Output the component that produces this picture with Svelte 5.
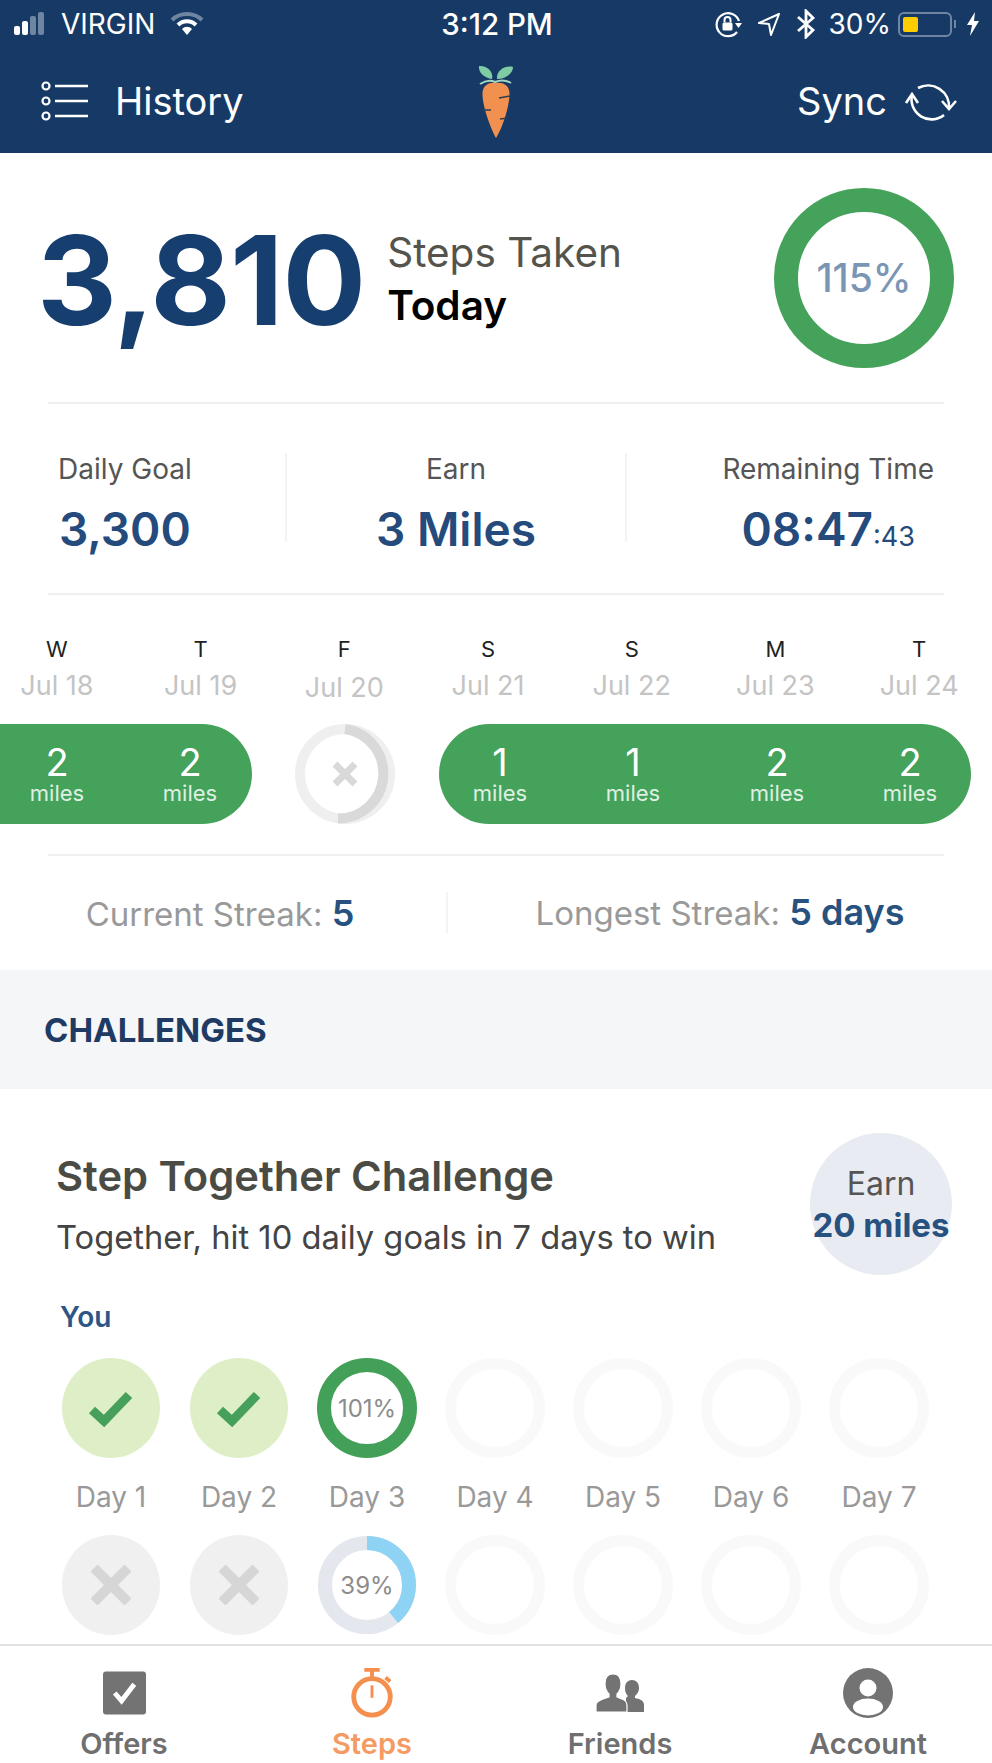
<script>
    const week = [
        ['W', 'Jul 18'], ['T', 'Jul 19'], ['F', 'Jul 20'], ['S', 'Jul 21'],
        ['S', 'Jul 22'], ['M', 'Jul 23'], ['T', 'Jul 24']
    ];
    const days = [1, 2, 3, 4, 5, 6, 7];
    const ring = 2 * Math.PI * 42;
</script>

<div class="phone">
    <header class="top">
        <div class="status">
            <div class="status-left">
                <svg class="signal" width="36" height="24" viewBox="0 0 36 24">
                    <rect x="0" y="14" width="6" height="9" rx="2" fill="#fff" />
                    <rect x="8" y="9" width="6" height="14" rx="2" fill="#fff" />
                    <rect x="16" y="4" width="6" height="19" rx="2" fill="#6f86a3" />
                    <rect x="24" y="0" width="6" height="23" rx="2" fill="#6f86a3" />
                </svg>
                <span>VIRGIN</span>
                <svg class="wifi" width="34" height="24" viewBox="0 0 34 24" fill="none">
                    <path d="M2 8 C10 0 24 0 32 8" stroke="#6f86a3" stroke-width="4" />
                    <path d="M8 13 C13 8 21 8 26 13" stroke="#fff" stroke-width="4" />
                    <path d="M12 17 C15 14 19 14 22 17 L17 23 Z" fill="#fff" />
                </svg>
            </div>
            <div class="time">3:12 PM</div>
            <div class="status-right">
                <svg width="28" height="28" viewBox="0 0 28 28" fill="none">
                    <path d="M23 22 A11.500 11.500 0 1 1 25 11" stroke="#fff" stroke-width="2.200" />
                    <path d="M21 13 L28 13 L24.500 18 Z" fill="#fff" />
                    <rect x="8.500" y="12.500" width="10" height="8" rx="1.500" fill="#fff" />
                    <path d="M10.500 12.500 V10 a3 3 0 0 1 6 0 V12.500" stroke="#fff" stroke-width="2" />
                </svg>
                <svg class="arrow" width="24" height="24" viewBox="0 0 24 24" fill="none">
                    <path d="M22 2 L2 11 L12 12 L14 23 Z" stroke="#fff" stroke-width="2" stroke-linejoin="round" />
                </svg>
                <svg class="bt" width="20" height="30" viewBox="0 0 20 30" fill="none">
                    <path d="M2 8 L17 21 L10 28 V2 L17 9 L2 22" stroke="#fff" stroke-width="2.800" />
                </svg>
                <span class="pct">30%</span>
                <div class="battery"><div class="level"></div></div>
                <div class="nub"></div>
                <svg class="bolt" width="14" height="24" viewBox="0 0 14 24">
                    <path d="M9 0 L1 13 H6 L4 24 L13 9 H8 Z" fill="#fff" />
                </svg>
            </div>
        </div>
        <nav class="bar">
            <div class="bar-left">
                <svg width="48" height="40" viewBox="0 0 48 40" fill="none" stroke="#fff">
                    <circle cx="5" cy="5" r="3.500" stroke-width="2.200" />
                    <circle cx="5" cy="20" r="3.500" stroke-width="2.200" />
                    <circle cx="5" cy="35" r="3.500" stroke-width="2.200" />
                    <path d="M14 5 H47 M14 20 H47 M14 35 H47" stroke-width="2.600" />
                </svg>
                <span>History</span>
            </div>
            <svg class="carrot" width="36" height="76" viewBox="0 0 36 76">
                <path d="M14 16 C7 15 0 10 1 3 C8 2 16 8 14 16 Z" fill="#7fcba3" />
                <path d="M19 16 C18 8 27 2 35 4 C35 11 27 16 19 16 Z" fill="#7fcba3" />
                <path d="M2 21 C8 17 13 17 17 19 C22 17 28 17 33 20" fill="none" stroke="#a3d6c4" stroke-width="2" />
                <path d="M18 20 C27 19 32 24 31.500 32 C31 45 24 66 18 75 C13 66 5 45 4.500 32 C4 24 9 19 18 20 Z" fill="#f2904f" />
                <path d="M32 33 L21 35 M4 47 L13 47 M30 55 L22 56" stroke="#2a3f55" stroke-width="1.600" />
            </svg>
            <div class="bar-right">
                <span>Sync</span>
                <svg width="54" height="46" viewBox="0 0 54 46" fill="none" stroke="#fff" stroke-width="2.600">
                    <path d="M14 10 A21 21 0 0 1 45 30" />
                    <path d="M38 23 L45 31 L52 23" />
                    <path d="M8 17 A20 20 0 0 0 40 37" />
                    <path d="M2 25 L8 16 L14 25" />
                </svg>
            </div>
        </nav>
    </header>

    <main class="content">
        <section class="hero">
            <div class="big">3,810</div>
            <div class="hero-label">
                <div class="taken">Steps Taken</div>
                <div class="today">Today</div>
            </div>
            <div class="goal-ring"><span>115%</span></div>
        </section>

        <section class="stats">
            <div class="stat first">
                <div class="stat-label">Daily Goal</div>
                <div class="stat-value">3,300</div>
            </div>
            <div class="stat mid">
                <div class="stat-label">Earn</div>
                <div class="stat-value">3 Miles</div>
            </div>
            <div class="stat last">
                <div class="stat-label">Remaining Time</div>
                <div class="stat-value">08:47<small>:43</small></div>
            </div>
        </section>

        <section class="week">
            <div class="week-head">
                {#each week as [letter, date], i}
                    <div class="wd" class:low={i === 2}>
                        <div class="letter">{letter}</div>
                        <div class="date">{date}</div>
                    </div>
                {/each}
            </div>
            <div class="pills">
                <div class="pill left">
                    {#each [2, 2] as n}
                        <div class="m"><b>{n}</b><span>miles</span></div>
                    {/each}
                </div>
                <svg class="missed" width="102" height="102" viewBox="0 0 102 102" fill="none">
                    <circle cx="51" cy="51" r="45" stroke="#efefef" stroke-width="10" />
                    <path d="M51 6 A45 45 0 0 1 44 95.500" stroke="#d9d9d9" stroke-width="10" />
                    <path d="M41 41 L61 61 M61 41 L41 61" stroke="#d9d9d9" stroke-width="7" />
                </svg>
                <div class="pill right">
                    {#each [1, 1, 2, 2] as n}
                        <div class="m"><b>{n}</b><span>miles</span></div>
                    {/each}
                </div>
            </div>
        </section>

        <section class="streaks">
            <div class="current">Current Streak: <b>5</b></div>
            <div class="longest">Longest Streak: <b>5 days</b></div>
        </section>

        <div class="band">CHALLENGES</div>

        <section class="challenge">
            <div class="ch-head">
                <div>
                    <h2>Step Together Challenge</h2>
                    <p>Together, hit 10 daily goals in 7 days to win</p>
                </div>
                <div class="earn"><span>Earn</span><b>20 miles</b></div>
            </div>
            <div class="you">You</div>
            <div class="days">
                {#each days as d}
                    <div class="day">
                        {#if d < 3}
                            <div class="dot won">
                                <svg width="46" height="38" viewBox="0 0 46 38" fill="none">
                                    <path d="M4 21 L16 32 L41 6" stroke="#469f5a" stroke-width="9" />
                                </svg>
                            </div>
                        {:else if d === 3}
                            <div class="dot full">101%</div>
                        {:else}
                            <div class="dot empty"></div>
                        {/if}
                        <div class="day-name">Day {d}</div>
                    </div>
                {/each}
            </div>
            <div class="days">
                {#each days as d}
                    <div class="day">
                        {#if d < 3}
                            <div class="dot lost">
                                <svg width="40" height="40" viewBox="0 0 40 40" fill="none">
                                    <path d="M3 3 L37 37 M37 3 L3 37" stroke="#d6d6d6" stroke-width="10" />
                                </svg>
                            </div>
                        {:else if d === 3}
                            <div class="dot partial">
                                <svg class="arc" width="100" height="100" viewBox="0 0 100 100" fill="none">
                                    <circle cx="50" cy="50" r="42" stroke="#e4e7ee" stroke-width="14" />
                                    <circle
                                        cx="50" cy="50" r="42" stroke="#8ed3f3" stroke-width="14"
                                        stroke-dasharray="{ring * 0.39} {ring}"
                                        transform="rotate(-90 50 50)"
                                    />
                                </svg>
                                <span>39%</span>
                            </div>
                        {:else}
                            <div class="dot empty"></div>
                        {/if}
                    </div>
                {/each}
            </div>
        </section>
    </main>

    <footer class="tabs">
        <div class="tab">
            <div class="tab-icon">
                <svg width="43" height="44" viewBox="0 0 44 44">
                    <rect width="44" height="44" rx="3" fill="#737373" />
                    <path d="M12 22 L19 30 L32 13" fill="none" stroke="#fff" stroke-width="5" />
                </svg>
            </div>
            <span>Offers</span>
        </div>
        <div class="tab active">
            <div class="tab-icon">
                <svg width="46" height="50" viewBox="0 0 46 52" fill="none" stroke="#f58f4e">
                    <path d="M15 2 H31 M23 2 V10 M37 10 L42 14" stroke-width="4" />
                    <circle cx="23" cy="30" r="19" stroke-width="5" />
                    <path d="M23 18 V31" stroke-width="3" />
                </svg>
            </div>
            <span>Steps</span>
        </div>
        <div class="tab">
            <div class="tab-icon">
                <svg width="48" height="38" viewBox="0 0 48 38">
                    <path d="M36 6 C41 6 43 10 43 14 C43 18 41 20 39 22 V24 C43 25 48 26 48 31 V38 H30 V24 L32 22 C30 20 29 18 29 14 C29 10 31 6 36 6 Z" fill="#737373" />
                    <path d="M17 0 C23 0 25 5 25 10 C25 15 23 18 21 20 V23 C26 25 31 26 31 31 V38 H0 V31 C0 26 8 25 13 23 V20 C11 18 9 15 9 10 C9 5 11 0 17 0 Z" fill="#737373" stroke="#fff" stroke-width="1.200" />
                </svg>
            </div>
            <span>Friends</span>
        </div>
        <div class="tab">
            <div class="tab-icon">
                <svg width="50" height="50" viewBox="0 0 50 50">
                    <circle cx="25" cy="25" r="25" fill="#737373" />
                    <circle cx="25" cy="20" r="8.500" fill="#fff" />
                    <ellipse cx="25" cy="39" rx="15" ry="8.500" fill="#fff" />
                </svg>
            </div>
            <span>Account</span>
        </div>
    </footer>
</div>

<style>
    :global(body) {
        margin: 0;
        background: #fff;
    }

    .phone {
        width: 992px;
        height: 1763px;
        display: flex;
        flex-direction: column;
        overflow: hidden;
        font-family: Inter, "Liberation Sans", sans-serif;
        color: #555;
        background: #fff;
    }

    .top {
        height: 153px;
        flex: none;
        background: #163a65;
        color: #fff;
    }

    .status {
        height: 48px;
        display: grid;
        grid-template-columns: 1fr auto 1fr;
        align-items: center;
        padding: 0 12px 0 14px;
        font-size: 28px;
    }

    .status-left, .status-right {
        display: flex;
        align-items: center;
    }

    .status-left span {
        margin-left: 11px;
        font-size: 28px;
    }

    .wifi {
        margin-left: 15px;
    }

    .status-right {
        justify-content: flex-end;
    }

    .arrow {
        margin-left: 15px;
    }

    .bt {
        margin-left: 15px;
    }

    .pct {
        margin-left: 13px;
    }

    .battery {
        width: 54px;
        height: 25px;
        margin-left: 7px;
        padding: 3px;
        box-sizing: border-box;
        border: 2px solid #6f86a3;
        border-radius: 6px;
    }

    .level {
        width: 15px;
        height: 100%;
        background: #ffcc00;
        border-radius: 2px;
    }

    .nub {
        width: 2px;
        height: 8px;
        margin-left: 2px;
        background: #6f86a3;
    }

    .bolt {
        margin-left: 10px;
    }

    .time {
        font-size: 29.500px;
        font-weight: 500;
    }

    .bar {
        height: 105px;
        display: flex;
        align-items: center;
        justify-content: space-between;
        padding: 0 34px 8px 41px;
        font-size: 38px;
    }

    .bar-left, .bar-right {
        display: flex;
        align-items: center;
        width: 300px;
    }

    .bar-left {
        gap: 26px;
    }

    .bar-right {
        justify-content: flex-end;
        gap: 17px;
    }

    .carrot {
        margin-right: 7px;
    }

    .content {
        flex: 1;
        min-height: 0;
        overflow: hidden;
    }

    .hero {
        height: 249px;
        box-sizing: content-box;
        margin: 0 48px;
        border-bottom: 2px solid #f0f0f0;
        display: flex;
        align-items: center;
    }

    .big {
        margin-left: -11px;
        margin-top: 4px;
        font-size: 124px;
        font-weight: 700;
        letter-spacing: -1px;
        color: #163f70;
    }

    .hero-label {
        margin-left: 22px;
        margin-top: 2px;
        font-size: 40.500px;
    }

    .taken {
        color: #55544c;
    }

    .today {
        margin-top: 4px;
        font-weight: 600;
        color: #000;
    }

    .goal-ring {
        width: 180px;
        height: 180px;
        margin-left: auto;
        margin-right: -10px;
        box-sizing: border-box;
        border: 24px solid #45a25a;
        border-radius: 50%;
        display: flex;
        align-items: center;
        justify-content: center;
        font-size: 39px;
        font-weight: 500;
        color: #7b96b5;
    }

    .stats {
        height: 191px;
        margin: 0 48px;
        box-sizing: border-box;
        padding-top: 49px;
        border-bottom: 2px solid #f0f0f0;
        display: grid;
        grid-template-columns: 237px 342px 1fr;
        grid-template-rows: 89px;
    }

    .stat {
        text-align: center;
    }

    .first {
        justify-self: start;
        padding-left: 10px;
    }

    .mid {
        border-left: 2px solid #f4f4f4;
        border-right: 2px solid #f4f4f4;
    }

    .last {
        justify-self: end;
        padding-right: 10px;
    }

    .stat-label {
        font-size: 28px;
        line-height: 32px;
        color: #555;
    }

    .stat-value {
        margin-top: 17px;
        font-size: 46px;
        line-height: 54px;
        font-weight: 600;
        color: #254a7c;
    }

    .stat-value small {
        font-size: 27px;
        font-weight: 400;
    }

    .week {
        height: 259px;
    }

    .week-head {
        width: 1006px;
        margin-left: -15px;
        padding-top: 41px;
        display: grid;
        grid-template-columns: repeat(7, 1fr);
        text-align: center;
    }

    .letter {
        font-size: 22px;
        line-height: 26px;
        color: #222;
    }

    .date {
        margin-top: 9px;
        font-size: 27px;
        line-height: 30px;
        color: #c4c4c4;
    }

    .wd.low .date {
        margin-top: 11px;
    }

    .pills {
        margin-top: 20px;
        display: flex;
        align-items: center;
    }

    .pill {
        height: 100px;
        display: flex;
        align-items: center;
        background: #45a25a;
        color: #fff;
    }

    .pill.left {
        width: 252px;
        box-sizing: border-box;
        padding-left: 27px;
        gap: 73px;
        border-radius: 0 50px 50px 0;
    }

    .pill.right {
        width: 532px;
        box-sizing: border-box;
        padding-left: 31px;
        gap: 73px;
        border-radius: 50px;
    }

    .pill.right .m:nth-child(3) {
        margin-left: 11px;
    }

    .m {
        width: 60px;
        flex: none;
        text-align: center;
    }

    .m b {
        display: block;
        font-size: 38px;
        line-height: 38px;
        font-weight: 400;
    }

    .m span {
        display: block;
        font-size: 22px;
        line-height: 24px;
        color: #dff0e3;
    }

    .missed {
        margin-left: 42px;
        margin-right: 43px;
    }

    .streaks {
        height: 116px;
        margin: 0 48px;
        box-sizing: border-box;
        border-top: 2px solid #f0f0f0;
        display: grid;
        grid-template-columns: 398px 1fr;
        align-items: center;
        text-align: center;
        font-size: 33px;
        color: #999;
    }

    .streaks > div {
        margin-bottom: 1px;
    }

    .current {
        padding-right: 54px;
    }

    .streaks b {
        font-weight: 600;
        font-size: 36px;
        color: #27527f;
    }

    .longest {
        line-height: 40px;
        padding-left: 48px;
        border-left: 2px solid #f4f4f4;
    }

    .band {
        height: 119px;
        display: flex;
        align-items: center;
        padding-left: 44px;
        background: #f5f6f8;
        font-size: 33px;
        font-weight: 700;
        color: #1f3a63;
    }

    .challenge {
        padding: 44px 47px 0;
    }

    .ch-head {
        display: flex;
        justify-content: space-between;
        margin-right: -7px;
    }

    .ch-head > div:first-child {
        padding: 18px 0 0 9px;
    }

    h2 {
        margin: 0;
        font-size: 41.700px;
        line-height: 50px;
        font-weight: 600;
        color: #4b4b45;
    }

    p {
        margin: 16px 0 0;
        font-size: 32.700px;
        line-height: 40px;
        color: #444;
    }

    .earn {
        width: 142px;
        height: 142px;
        border-radius: 50%;
        background: #e9ebf3;
        display: flex;
        flex-direction: column;
        align-items: center;
        justify-content: center;
        gap: 2px;
        font-size: 32px;
        color: #555;
    }

    .earn b {
        font-weight: 700;
        font-size: 33px;
        color: #27527f;
        white-space: nowrap;
    }

    .you {
        margin: 25px 0 0 13px;
        font-size: 28px;
        line-height: 34px;
        font-weight: 600;
        color: #2d5687;
    }

    .days {
        display: grid;
        grid-template-columns: repeat(7, 128px);
        margin-top: 24px;
    }

    .days + .days {
        margin-top: 22px;
    }

    .day {
        display: flex;
        flex-direction: column;
        align-items: center;
    }

    .dot {
        width: 100px;
        height: 100px;
        box-sizing: border-box;
        border-radius: 50%;
        display: flex;
        align-items: center;
        justify-content: center;
        position: relative;
        font-size: 24px;
        color: #8c8c8c;
    }

    .won {
        width: 98px;
        background: #deeec6;
    }

    .lost {
        width: 98px;
        background: #f0f0f0;
    }

    .full {
        border: 14px solid #43a058;
    }

    .empty {
        border: 11px solid #f9f9f9;
    }

    .arc {
        position: absolute;
        left: 0;
        top: 0;
    }

    .partial span {
        position: relative;
    }

    .day-name {
        margin-top: 23px;
        font-size: 28px;
        line-height: 32px;
        color: #999;
    }

    .tabs {
        height: 119px;
        flex: none;
        box-sizing: border-box;
        border-top: 2px solid #e2e2e2;
        background: #fff;
        display: grid;
        grid-template-columns: repeat(4, 248px);
    }

    .tab {
        height: 100%;
        padding-top: 20px;
        box-sizing: border-box;
        display: flex;
        flex-direction: column;
        align-items: center;
        font-size: 29px;
        font-weight: 600;
        color: #6f6f6f;
    }

    .tab-icon {
        height: 54px;
        display: flex;
        align-items: center;
    }

    .tab span {
        line-height: 34px;
        margin-top: 7px;
    }

    .active {
        color: #f59a63;
    }
</style>
